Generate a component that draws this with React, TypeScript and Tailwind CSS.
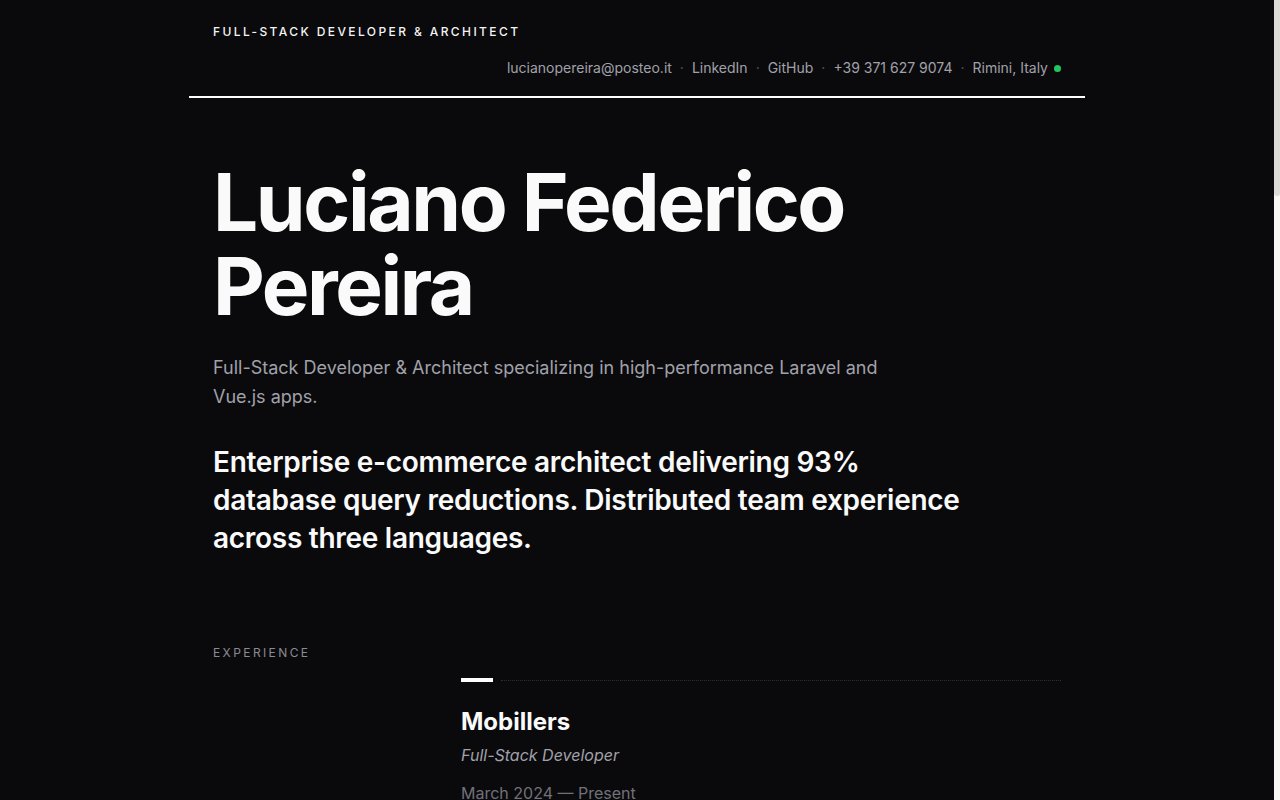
import React from 'react';

const contacts = ['lucianopereira@posteo.it', 'LinkedIn', 'GitHub', '+39 371 627 9074', 'Rimini, Italy'];

const jobs = [
  {
    company: 'Mobillers',
    role: 'Full-Stack Developer',
    period: 'March 2024 — Present',
    points: [
      'Re-architected the catalogue layer of a multi-store Laravel platform, cutting database queries per page by 93%.',
      'Built a Vue.js storefront with server-side rendering and incremental hydration.',
      'Coordinated a distributed team working across Italian, Spanish and English.',
    ],
  },
  {
    company: 'Freelance',
    role: 'Software Architect',
    period: 'January 2021 — February 2024',
    points: [
      'Designed and delivered e-commerce backends for clients in Italy and South America.',
      'Introduced automated testing and CI pipelines across every project.',
    ],
  },
  {
    company: 'Studio Web',
    role: 'Backend Developer',
    period: 'June 2018 — December 2020',
    points: [
      'Maintained Laravel applications serving thousands of daily orders.',
      'Migrated legacy PHP services to a modular, queue-driven architecture.',
    ],
  },
];

const App: React.FC = () => {
  return (
    <div
      className="min-h-screen bg-[#0a0a0c] text-white pr-[6px]"
      style={{ fontFamily: 'Inter, "Noto Sans", sans-serif' }}
    >
      {/* thin page scrollbar */}
      <div className="fixed top-0 right-0 w-[6px] h-screen bg-[#f9f7f3]">
        <div className="h-[196px] bg-[#dcdbd8] rounded-b-[3px]" />
      </div>

      <div className="max-w-4xl mx-auto">
        <header className="border-b-2 border-white px-6 pt-6 pb-[18px]">
          <p className="text-xs font-medium tracking-[0.2em] uppercase text-[#f4f4f5] leading-4">
            Full-Stack Developer &amp; Architect
          </p>
          <div className="mt-[18px] flex items-center justify-end gap-2 text-sm leading-5 text-[#a1a1aa]">
            {contacts.map((c, i) => (
              <React.Fragment key={c}>
                {i > 0 && <span className="text-[#5b5b63]">·</span>}
                <span>{c}</span>
              </React.Fragment>
            ))}
            <span className="w-[7px] h-[7px] rounded-full bg-[#22c55e] -ml-0.5" />
          </div>
        </header>

        <main className="px-6">
          <section className="pt-[62px]">
            <h1 className="text-[80px] leading-[84px] font-bold tracking-[-0.03em] text-[#fafafa]">
              Luciano Federico
              <br />
              Pereira
            </h1>
            <p className="mt-[25px] max-w-2xl text-lg leading-[29px] text-[#a1a1aa]">
              Full-Stack Developer &amp; Architect specializing in high-performance Laravel and Vue.js apps.
            </p>
            <p className="mt-8 max-w-3xl text-[28px] leading-[38px] font-semibold tracking-[-0.01em] text-[#fafafa]">
              Enterprise e-commerce architect delivering 93% database query reductions. Distributed team experience
              across three languages.
            </p>
          </section>

          <section className="mt-[88px] grid grid-cols-[200px_1fr] gap-12 pb-24">
            <h2 className="text-xs leading-4 tracking-[0.2em] uppercase text-[#8a8a93]">Experience</h2>
            <div className="pt-[33px] flex flex-col gap-16">
              {jobs.map(job => (
                <article key={job.company}>
                  <div className="flex items-center gap-2">
                    <div className="w-8 h-1 bg-white" />
                    <div className="flex-1 border-t border-dotted border-[#2e2e33]" />
                  </div>
                  <h3 className="mt-6 text-2xl leading-8 font-bold text-[#fafafa]">{job.company}</h3>
                  <p className="mt-[5px] italic text-base leading-6 text-[#a1a1aa]">{job.role}</p>
                  <p className="mt-[14px] text-base leading-6 text-[#71717a]">{job.period}</p>
                  <ul className="mt-6 space-y-3 text-base leading-7 text-[#d4d4d8]">
                    {job.points.map(p => (
                      <li key={p}>{p}</li>
                    ))}
                  </ul>
                </article>
              ))}
            </div>
          </section>

          <section className="grid grid-cols-[200px_1fr] gap-12 pb-24">
            <h2 className="text-xs leading-4 tracking-[0.2em] uppercase text-[#8a8a93]">Skills</h2>
            <div className="text-base leading-7 text-[#d4d4d8]">
              Laravel · PHP · Vue.js · TypeScript · MySQL · PostgreSQL · Redis · Docker · CI/CD
            </div>
          </section>

          <section className="grid grid-cols-[200px_1fr] gap-12 pb-32">
            <h2 className="text-xs leading-4 tracking-[0.2em] uppercase text-[#8a8a93]">Languages</h2>
            <div className="text-base leading-7 text-[#d4d4d8]">Italian · Spanish · English</div>
          </section>
        </main>
      </div>
    </div>
  );
};

export default App;
